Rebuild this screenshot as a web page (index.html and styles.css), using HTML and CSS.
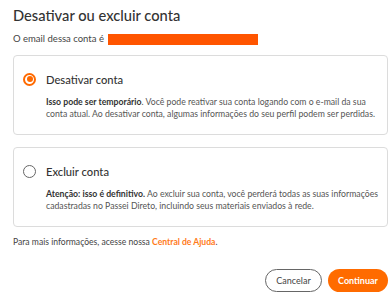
FILE: index.html
```html
<!DOCTYPE html>
<html lang="pt-BR">
<head>
<meta charset="utf-8">
<link rel="stylesheet" href="styles.css">
</head>
<body>
<div class="dialog">
  <h1 class="title">Desativar ou excluir conta</h1>
  <p class="email">O email dessa conta é <span class="redact"></span></p>
  <div class="card">
    <div class="option-head">
      <span class="radio radio-on"></span>
      <span class="option-title">Desativar conta</span>
    </div>
    <p class="desc"><b>Isso pode ser temporário</b>. Você pode reativar sua conta logando com o e-mail da sua conta atual. Ao desativar conta, algumas informações do seu perfil podem ser perdidas.</p>
  </div>
  <div class="card">
    <div class="option-head">
      <span class="radio"></span>
      <span class="option-title">Excluir conta</span>
    </div>
    <p class="desc"><b>Atenção: isso é definitivo.</b> Ao excluir sua conta, você perderá todas as suas informações cadastradas no Passei Direto, incluindo seus materiais enviados à rede.</p>
  </div>
  <p class="help">Para mais informações, acesse nossa <a class="link" href="#">Central de Ajuda</a>.</p>
  <div class="actions">
    <button class="btn btn-outline">Cancelar</button>
    <button class="btn btn-primary">Continuar</button>
  </div>
</div>
</body>
</html>
```
FILE: styles.css
```css
* { box-sizing: border-box; }
html, body { margin: 0; background: #fff; }
body {
  font-family: Lato, "Noto Sans", sans-serif;
  color: #333;
}
.dialog {
  padding: 5px 4px 0 13px;
  display: flex;
  flex-direction: column;
}
.title {
  margin: 0;
  font-size: 14.7px;
  line-height: 20px;
  font-weight: 500;
  color: #333;
}
.email {
  margin: 7px 0 0;
  font-size: 9.5px;
  line-height: 14px;
  color: #444;
  display: flex;
  align-items: center;
}
.redact {
  display: inline-block;
  width: 150px;
  height: 11px;
  margin-left: 4px;
  background: #ff5500;
}
.card {
  border: 1px solid #dcdcdc;
  border-radius: 4px;
  padding: 15px 2px 14px 9px;
  margin-top: 9px;
}
.card + .card { margin-top: 12px; }
.option-head {
  display: flex;
  align-items: center;
  gap: 10px;
  height: 16px;
}
.radio {
  width: 13px;
  height: 13px;
  border-radius: 50%;
  border: 1.5px solid #666;
  flex: none;
  position: relative;
}
.radio-on {
  border: 2px solid #ff6a00;
}
.radio-on::after {
  content: "";
  position: absolute;
  left: 1.5px; top: 1.5px;
  width: 6px; height: 6px;
  border-radius: 50%;
  background: #ff6a00;
}
.option-title {
  font-size: 11.2px;
  font-weight: 500;
  color: #333;
}
.desc {
  margin: 9px 0 0 23px;
  font-size: 8.7px;
  line-height: 12px;
  color: #555;
}
.desc b { color: #333; font-weight: 700; }
.help {
  margin: 8px 0 0;
  font-size: 8.6px;
  line-height: 14px;
  color: #444;
}
.link {
  color: #ff7a1a;
  font-weight: 700;
  text-decoration: none;
}
.actions {
  margin-top: 20px;
  display: flex;
  justify-content: flex-end;
  gap: 6px;
}
.btn {
  height: 23px;
  border-radius: 12px;
  font-family: inherit;
  font-size: 9px;
  padding: 0;
  cursor: pointer;
}
.btn-outline {
  width: 57px;
  background: #fff;
  border: 1px solid #666;
  color: #444;
}
.btn-primary {
  width: 60px;
  background: #ff6b00;
  border: none;
  color: #fff;
  font-weight: 700;
}
```
